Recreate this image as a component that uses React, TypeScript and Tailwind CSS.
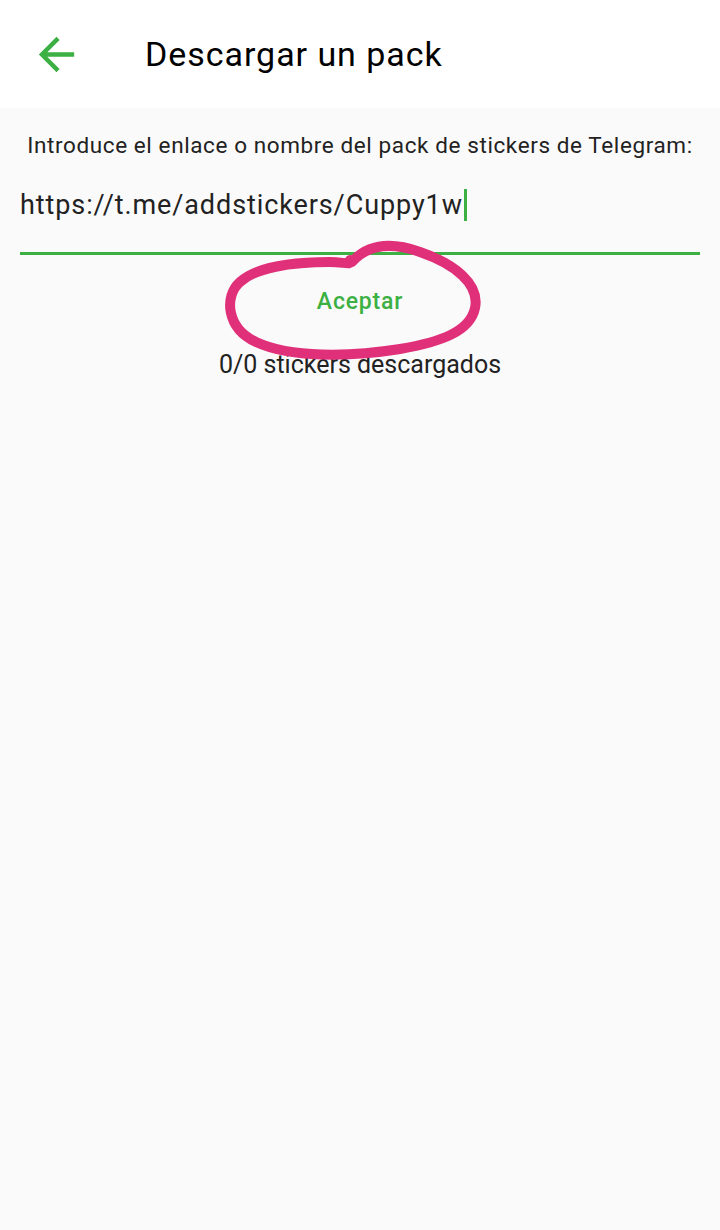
import React from "react";

export default function App() {
  return (
    <div className="relative w-[720px] h-[1230px] bg-[#fafafa] overflow-hidden" style={{ fontFamily: "Roboto, 'Noto Sans', sans-serif" }}>
      <div className="h-[108px] bg-white flex items-center">
        <div className="w-[112px] h-[108px] flex items-center pl-[30px]">
          <svg width="53" height="53" viewBox="0 0 24 24" fill="#3cb043">
            <path d="M20 11H7.83l5.59-5.59L12 4l-8 8 8 8 1.41-1.41L7.83 13H20v-2z" />
          </svg>
        </div>
        <div className="pl-[33px] text-[34px] tracking-[0.95px] text-black leading-none">Descargar un pack</div>
      </div>
      <div className="px-5">
        <div className="text-center text-[22.5px] tracking-[0.6px] text-[#222] mt-[24px] leading-[26px]">
          Introduce el enlace o nombre del pack de stickers de Telegram:
        </div>
        <div className="mt-[30px] h-[34px] flex items-center border-b-[3px] border-[#3cb043] pb-[30px] box-content">
          <span className="text-[27px] tracking-[0.9px] text-[#222] leading-none">https://t.me/addstickers/Cuppy1w</span>
          <span className="w-[3px] h-[32px] bg-[#3cb043] ml-[1px]"></span>
        </div>
        <div className="flex justify-center mt-[35px]">
          <span className="text-[23px] tracking-[0.8px] font-medium text-[#3cb043] leading-none">Aceptar</span>
        </div>
        <div className="text-center text-[25px] text-[#222] mt-[39px] leading-none">0/0 stickers descargados</div>
      </div>
      <svg className="absolute left-0 top-0" width="720" height="400" viewBox="0 0 720 400" fill="none">
        <path
          d="M352,262 C368,244 392,242 420,252 C455,264 480,284 475,308 C470,332 440,342 400,349 C350,357 290,358 256,342 C226,328 224,296 240,282 C255,268 290,262 330,262 C345,262 352,266 350,260"
          stroke="#e0307a"
          strokeWidth="10"
          strokeLinecap="round"
          strokeLinejoin="round"
        />
      </svg>
    </div>
  );
}
